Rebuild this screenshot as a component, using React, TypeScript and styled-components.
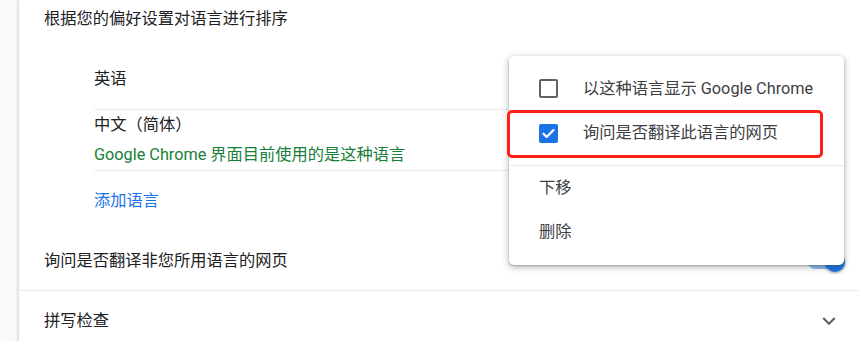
import React from "react";
import styled, { createGlobalStyle } from "styled-components";

const Global = createGlobalStyle`
  html, body { margin: 0; padding: 0; background: #f8f9fa; }
  body {
    font-family: Roboto, "Noto Sans CJK SC", "Noto Sans", sans-serif;
    font-size: 16.25px;
    color: #202124;
    overflow: hidden;
  }
`;

const Page = styled.div`
  position: relative;
  width: 859px;
  height: 341px;
  display: flex;
  overflow: hidden;
`;

const Gutter = styled.div`
  width: 18px;
  flex: none;
  background: #f8f9fa;
`;

const Card = styled.div`
  flex: 1;
  background: #fff;
  border-left: 1px solid #e3e4e6;
  box-shadow: -1px 0 2px rgba(60, 64, 67, 0.12);
  display: flex;
  flex-direction: column;
  overflow: hidden;
  & > * { flex-shrink: 0; }
`;

const Heading = styled.div`
  height: 38px;
  display: flex;
  align-items: center;
  padding-left: 25px;
  line-height: 20px;
`;

const LangList = styled.div`
  margin: 10px 40px 0 75px;
  display: flex;
  flex-direction: column;
`;

const LangRow = styled.div<{ $h: number; $sep?: boolean }>`
  height: ${(p) => p.$h}px;
  flex-shrink: 0;
  box-sizing: border-box;
  border-bottom: ${(p) => (p.$sep ? "1px solid #e8eaed" : "none")};
  display: flex;
  flex-direction: column;
  justify-content: center;
  gap: 10px;
  line-height: 20px;
`;

const SubText = styled.div`
  color: #188038;
`;

const LinkText = styled.div`
  color: #1a73e8;
`;

const Row = styled.div<{ $sep?: boolean; $pr: number }>`
  height: 60px;
  box-sizing: border-box;
  display: flex;
  align-items: center;
  justify-content: space-between;
  padding: 0 ${(p) => p.$pr}px 0 25px;
  border-bottom: ${(p) => (p.$sep ? "1px solid #e8eaed" : "none")};
  line-height: 20px;
`;

const Toggle = styled.div`
  position: relative;
  width: 34px;
  height: 14px;
  margin-top: 2px;
  border-radius: 7px;
  background: rgba(26, 115, 232, 0.5);
`;

const Knob = styled.div`
  position: absolute;
  right: -3px;
  top: -3px;
  width: 20px;
  height: 20px;
  border-radius: 50%;
  background: #1a73e8;
  box-shadow: 0 1px 3px rgba(0, 0, 0, 0.4);
`;

const Menu = styled.div`
  position: absolute;
  left: 509px;
  top: 56px;
  width: 335px;
  height: 209px;
  box-sizing: border-box;
  background: #fff;
  border-radius: 5px;
  box-shadow: 0 2px 6px 1px rgba(60, 64, 67, 0.3), 0 1px 2px rgba(60, 64, 67, 0.3);
  padding: 10px 0 11px;
  display: flex;
  flex-direction: column;
`;

const MenuItem = styled.div<{ $h: number }>`
  height: ${(p) => p.$h}px;
  flex-shrink: 0;
  display: flex;
  align-items: center;
  padding-left: 30px;
  color: #3c4043;
  line-height: 20px;
`;

const MenuSep = styled.div`
  height: 1px;
  flex-shrink: 0;
  background: #e8eaed;
  margin-top: 10px;
`;

const Box = styled.div<{ $checked?: boolean }>`
  width: 19px;
  height: 19px;
  box-sizing: border-box;
  border-radius: 2px;
  margin-right: 25px;
  flex: none;
  border: ${(p) => (p.$checked ? "none" : "2.5px solid #5f6368")};
  background: ${(p) => (p.$checked ? "#1a73e8" : "transparent")};
  display: flex;
  align-items: center;
  justify-content: center;
`;

const Highlight = styled.div`
  position: absolute;
  left: 507px;
  top: 110px;
  width: 316px;
  height: 48px;
  box-sizing: border-box;
  border: 3px solid #ff1f16;
  border-radius: 5px;
  pointer-events: none;
`;

const Chevron = () => (
  <svg width="26" height="26" viewBox="0 0 24 24" fill="#5f6368">
    <path d="M7.41 8.59 12 13.17l4.59-4.58L18 10l-6 6-6-6z" />
  </svg>
);

const Check = () => (
  <svg width="15" height="15" viewBox="0 0 24 24" fill="none" stroke="#fff" strokeWidth="3.6" strokeLinecap="round" strokeLinejoin="round">
    <path d="M4 12.5l5 5L20 6.5" />
  </svg>
);

export default function App() {
  return (
    <>
      <Global />
      <Page>
        <Gutter />
        <Card>
          <Heading>根据您的偏好设置对语言进行排序</Heading>
          <LangList>
            <LangRow $h={62} $sep>
              <div>英语</div>
            </LangRow>
            <LangRow $h={61} $sep>
              <div>中文（简体）</div>
              <SubText>Google Chrome 界面目前使用的是这种语言</SubText>
            </LangRow>
            <LangRow $h={60}>
              <LinkText>添加语言</LinkText>
            </LangRow>
          </LangList>
          <Row $sep $pr={17}>
            <span>询问是否翻译非您所用语言的网页</span>
            <Toggle>
              <Knob />
            </Toggle>
          </Row>
          <Row $pr={17}>
            <span>拼写检查</span>
            <Chevron />
          </Row>
        </Card>
        <Menu>
          <MenuItem $h={45}>
            <Box />
            以这种语言显示 Google Chrome
          </MenuItem>
          <MenuItem $h={44}>
            <Box $checked>
              <Check />
            </Box>
            询问是否翻译此语言的网页
          </MenuItem>
          <MenuSep />
          <MenuItem $h={44}>下移</MenuItem>
          <MenuItem $h={44}>删除</MenuItem>
        </Menu>
        <Highlight />
      </Page>
    </>
  );
}
